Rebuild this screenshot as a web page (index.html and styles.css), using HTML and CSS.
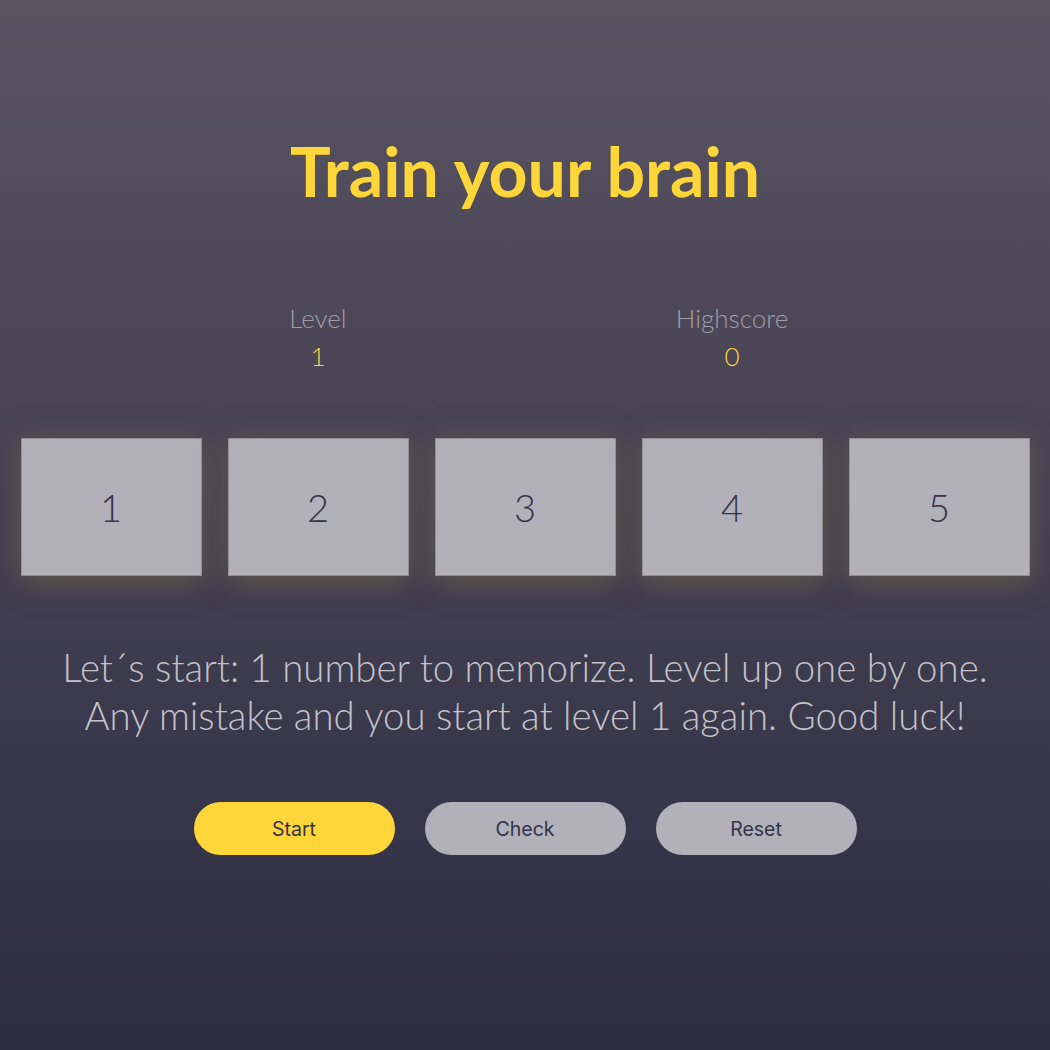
FILE: index.html
```html
<!DOCTYPE html>
<html lang="en">
<head>
<meta charset="utf-8">
<title>Train your brain</title>
<link rel="stylesheet" href="styles.css">
</head>
<body>
<main class="app">
  <h1 class="title">Train your brain</h1>
  <section class="stats">
    <div class="stat stat-level">
      <div class="stat-label">Level</div>
      <div class="stat-value">1</div>
    </div>
    <div class="stat stat-high">
      <div class="stat-label">Highscore</div>
      <div class="stat-value">0</div>
    </div>
  </section>
  <section class="cards">
    <div class="card">1</div>
    <div class="card">2</div>
    <div class="card">3</div>
    <div class="card">4</div>
    <div class="card">5</div>
  </section>
  <p class="message">Let´s start: 1 number to memorize. Level up one by one.<br>Any mistake and you start at level 1 again. Good luck!</p>
  <div class="actions">
    <button class="btn btn-primary">Start</button>
    <button class="btn">Check</button>
    <button class="btn">Reset</button>
  </div>
</main>
</body>
</html>
```
FILE: styles.css
```css
html, body {
  margin: 0;
  padding: 0;
  height: 100%;
}
body {
  background: linear-gradient(to bottom, #5a5461 0%, #2c2c42 100%);
  min-height: 1050px;
  font-family: Lato, "Open Sans", sans-serif;
  color: #c2c0c8;
}
.app {
  display: flex;
  flex-direction: column;
  align-items: center;
  padding-top: 132px;
}
.title {
  margin: 0;
  font-family: Lato, sans-serif;
  font-weight: 700;
  font-size: 68px;
  line-height: 78px;
  color: #ffd63a;
}
.stats {
  display: grid;
  grid-template-columns: repeat(5, 181px);
  column-gap: 26px;
  margin-top: 89px;
  text-align: center;
  font-weight: 300;
  font-size: 26px;
}
.stat-level { grid-column: 2; }
.stat-high { grid-column: 4; }
.stat-label {
  color: #a09da8;
  line-height: 38px;
}
.stat-value {
  color: #ffd63a;
  line-height: 38px;
}
.cards {
  display: flex;
  gap: 26px;
  margin-top: 63px;
}
.card {
  width: 181px;
  height: 138px;
  box-sizing: border-box;
  background: #b2b0b9;
  border: 1px solid #928f97;
  box-shadow: 0 5px 26px rgba(115, 100, 75, 0.75);
  display: flex;
  align-items: center;
  justify-content: center;
  font-weight: 300;
  font-size: 38px;
  color: #363449;
}
.message {
  margin: 67px 0 0;
  text-align: center;
  font-weight: 300;
  font-size: 38.4px;
  line-height: 48px;
  color: #c3c1c9;
}
.actions {
  display: flex;
  gap: 30px;
  margin-top: 63px;
}
.btn {
  width: 201px;
  height: 53px;
  border: none;
  border-radius: 27px;
  background: #b2b0b9;
  font-family: Inter, Roboto, sans-serif;
  font-size: 19.5px;
  padding-top: 2px;
  color: #34334a;
  cursor: pointer;
}
.btn-primary {
  background: #ffd63a;
}
```
